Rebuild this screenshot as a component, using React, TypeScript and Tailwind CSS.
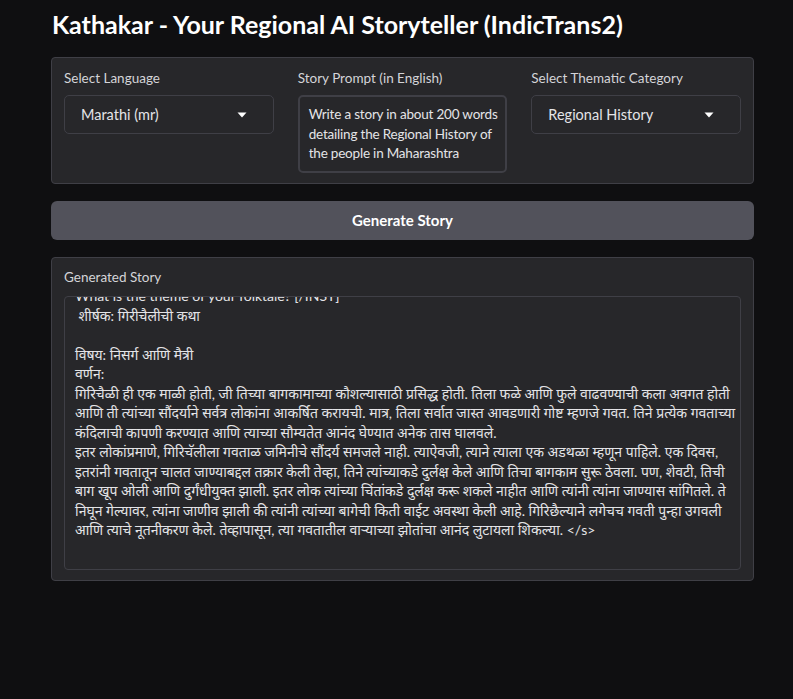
const storyLines = [
  "What is the theme of your folktale? [/INST]",
  " शीर्षक: गिरीचैलीची कथा",
  "",
  "विषय: निसर्ग आणि मैत्री",
  "वर्णन:",
  "गिरिचैळी ही एक माळी होती, जी तिच्या बागकामाच्या कौशल्यासाठी प्रसिद्ध होती. तिला फळे आणि फुले वाढवण्याची कला अवगत होती",
  "आणि ती त्यांच्या सौंदर्याने सर्वत्र लोकांना आकर्षित करायची. मात्र, तिला सर्वात जास्त आवडणारी गोष्ट म्हणजे गवत. तिने प्रत्येक गवताच्या",
  "कंदिलाची कापणी करण्यात आणि त्याच्या सौम्यतेत आनंद घेण्यात अनेक तास घालवले.",
  "इतर लोकांप्रमाणे, गिरिचॅलीला गवताळ जमिनीचे सौंदर्य समजले नाही. त्याऐवजी, त्याने त्याला एक अडथळा म्हणून पाहिले. एक दिवस,",
  "इतरांनी गवतातून चालत जाण्याबद्दल तक्रार केली तेव्हा, तिने त्यांच्याकडे दुर्लक्ष केले आणि तिचा बागकाम सुरू ठेवला. पण, शेवटी, तिची",
  "बाग खूप ओली आणि दुर्गंधीयुक्त झाली. इतर लोक त्यांच्या चिंतांकडे दुर्लक्ष करू शकले नाहीत आणि त्यांनी त्यांना जाण्यास सांगितले. ते",
  "निघून गेल्यावर, त्यांना जाणीव झाली की त्यांनी त्यांच्या बागेची किती वाईट अवस्था केली आहे. गिरिछैल्याने लगेचच गवती पुन्हा उगवली",
  "आणि त्याचे नूतनीकरण केले. तेव्हापासून, त्या गवतातील वाऱ्याच्या झोतांचा आनंद लुटायला शिकल्या. </s>",
];

function Caret() {
  return (
    <svg width="10" height="6" viewBox="0 0 10 6" className="fill-white">
      <path d="M0.5 0.5h9L5 5.5z" />
    </svg>
  );
}

function SelectBox({ label, value }: { label: string; value: string }) {
  return (
    <div className="flex flex-col">
      <span className="text-[13.5px] leading-[20px] text-zinc-300 mb-[7px]">{label}</span>
      <div className="h-[39px] flex items-center justify-between pl-[16px] pr-[26px] border border-[#3f3f46] rounded-[5px] bg-[#27272a]">
        <span className="text-[14.5px] text-zinc-200">{value}</span>
        <Caret />
      </div>
    </div>
  );
}

export default function App() {
  return (
    <div
      className="min-h-[699px] bg-[#0f0f11] pl-[51px] pr-[39px] pt-[8px]"
      style={{ fontFamily: "Lato, 'Noto Sans', sans-serif" }}
    >
      <h1 className="text-[25px] font-bold text-white leading-[32px] ml-[1px]">
        Kathakar - Your Regional AI Storyteller (IndicTrans2)
      </h1>

      {/* Inputs */}
      <div className="mt-[17px] bg-[#27272a] border border-[#3f3f46] rounded-[4px] px-[12px] pt-[10px] pb-[10px] grid grid-cols-3 gap-x-[24px]">
        <SelectBox label="Select Language" value="Marathi (mr)" />
        <div className="flex flex-col">
          <span className="text-[13.5px] leading-[20px] text-zinc-300 mb-[7px]">Story Prompt (in English)</span>
          <div className="h-[78px] border-2 border-[#3f3f46] rounded-[5px] px-[9px] pt-[8px] text-[13.5px] leading-[19.5px] text-zinc-200 whitespace-nowrap tracking-[-0.2px]">
            Write a story in about 200 words
            <br />
            detailing the Regional History of
            <br />
            the people in Maharashtra
          </div>
        </div>
        <SelectBox label="Select Thematic Category" value="Regional History" />
      </div>

      {/* Button */}
      <button className="mt-[17px] w-full h-[39px] rounded-[6px] bg-[#52525b] text-white font-bold text-[15px]">
        Generate Story
      </button>

      {/* Output */}
      <div className="mt-[17px] bg-[#27272a] border border-[#3f3f46] rounded-[4px] px-[12px] pt-[9px] pb-[10px]">
        <span className="block text-[13.5px] leading-[20px] text-zinc-300 mb-[9px]">Generated Story</span>
        <div className="h-[274px] overflow-hidden border border-[#3f3f46] rounded-[4px] px-[10px]">
          <div className="-mt-[11px] text-[14px] leading-[19.5px] text-zinc-200 whitespace-pre">
            {storyLines.map((l, i) => (
              <div key={i} className="h-[19.5px]">{l}</div>
            ))}
          </div>
        </div>
      </div>
    </div>
  );
}
